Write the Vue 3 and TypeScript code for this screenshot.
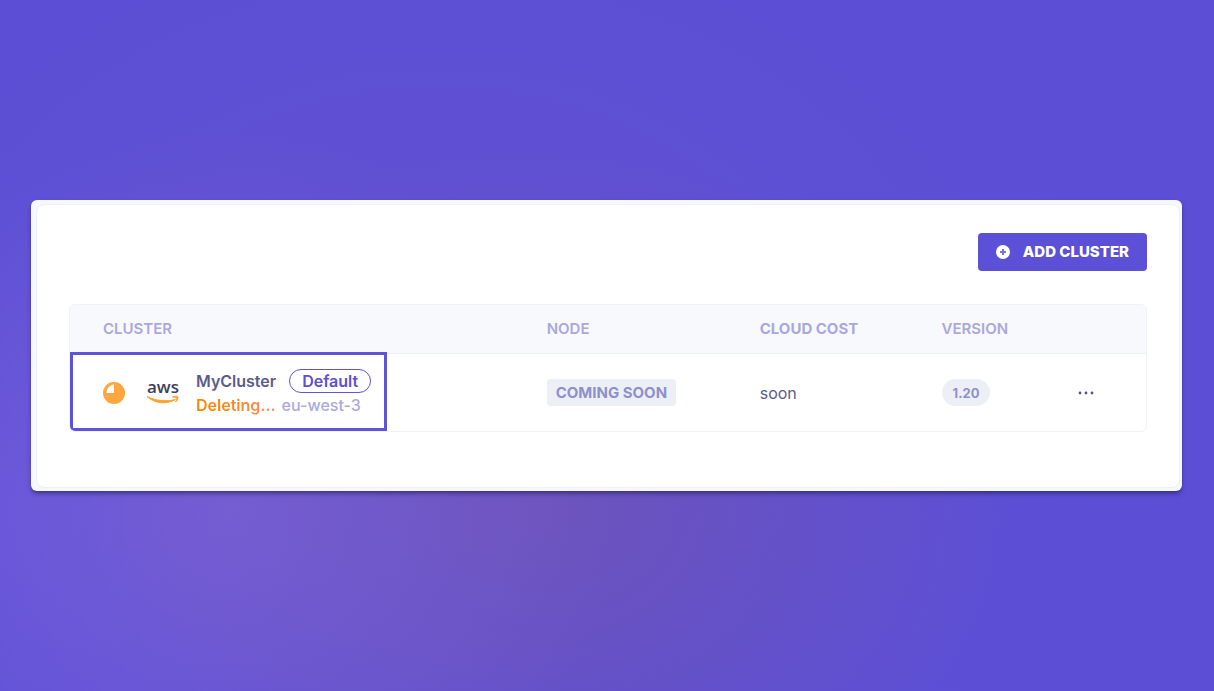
<script setup lang="ts">
interface Cluster {
  name: string
  status: string
  region: string
  nodes: string
  cost: string
  version: string
}

const clusters: Cluster[] = [
  {
    name: 'MyCluster',
    status: 'Deleting...',
    region: 'eu-west-3',
    nodes: 'COMING SOON',
    cost: 'soon',
    version: '1.20',
  },
]
</script>

<template>
  <main class="page">
    <section class="frame">
      <div class="panel">
        <div class="toolbar">
          <button class="add" type="button">
            <svg class="add-icon" viewBox="0 0 14 14" aria-hidden="true">
              <circle cx="7" cy="7" r="7" fill="#fff" />
              <path d="M7 4v6M4 7h6" stroke="#7b72df" stroke-width="2" />
            </svg>
            <span>ADD CLUSTER</span>
          </button>
        </div>

        <div class="table-box">
          <table class="table">
            <colgroup>
              <col class="col-cluster" />
              <col class="col-node" />
              <col class="col-cost" />
              <col class="col-version" />
              <col />
            </colgroup>
            <thead>
              <tr>
                <th class="first" scope="col">CLUSTER</th>
                <th scope="col">NODE</th>
                <th class="strong" scope="col">CLOUD COST</th>
                <th scope="col">VERSION</th>
                <td></td>
              </tr>
            </thead>
            <tbody>
              <tr v-for="cluster in clusters" :key="cluster.name">
                <td class="cluster-cell">
                  <div class="cluster">
                    <svg class="progress" viewBox="0 0 22 22" aria-hidden="true">
                      <circle cx="11" cy="11" r="11" fill="#ffa640" />
                      <path d="M11 2.500V11H3.500C3.500 6.500 6.500 3 11 2.500z" fill="#fff" />
                    </svg>
                    <svg class="aws" viewBox="0 0 34 34" role="img" aria-label="aws">
                      <text class="aws-text" x="1" y="17">aws</text>
                      <path d="M1 20.500C9 28 21 28.500 29.500 23.500C21 25.800 9 24.800 1 20.500z" fill="#ffa32b" stroke="#ffa32b" stroke-width="1" stroke-linejoin="round" />
                      <path d="M26.500 21c2-1 4.800-1 5.300-.5.500.9-.2 3.800-2 5.300.6-1.600 1.100-3 .7-3.800-.6-.6-2.300-.8-4-1z" fill="#ffa32b" stroke="#ffa32b" stroke-width="1" stroke-linejoin="round" />
                    </svg>
                    <div class="info">
                      <div class="line">
                        <span class="name">{{ cluster.name }}</span>
                        <span class="default">Default</span>
                      </div>
                      <div class="line second">
                        <span class="status">{{ cluster.status }}</span>
                        <span class="region">{{ cluster.region }}</span>
                      </div>
                    </div>
                  </div>
                </td>
                <td><span class="tag">{{ cluster.nodes }}</span></td>
                <td>{{ cluster.cost }}</td>
                <td><span class="tag pill">{{ cluster.version }}</span></td>
                <td>
                  <button class="more" type="button" aria-label="More actions">
                    <svg viewBox="0 0 18 4" width="18" height="4" aria-hidden="true">
                      <g fill="#54518f">
                        <circle cx="3" cy="2" r="1.400" />
                        <circle cx="9" cy="2" r="1.400" />
                        <circle cx="15" cy="2" r="1.400" />
                      </g>
                    </svg>
                  </button>
                </td>
              </tr>
            </tbody>
          </table>
        </div>
      </div>
    </section>
  </main>
</template>

<style>
body {
  margin: 0;
}
</style>

<style scoped>
.page {
  box-sizing: border-box;
  min-height: 100vh;
  display: flex;
  align-items: center;
  padding: 0 32px 0 31px;
  font-family: Inter, "Liberation Sans", sans-serif;
  font-size: 16px;
  color: #5d5b8d;
  background:
    radial-gradient(ellipse 380px 380px at 19% 74%, rgba(130, 102, 214, 0.55), rgba(130, 102, 214, 0) 100%),
    radial-gradient(ellipse 460px 360px at 45% 74%, rgba(118, 86, 170, 0.55), rgba(118, 86, 170, 0) 100%),
    radial-gradient(ellipse 680px 560px at 36% 60%, rgba(108, 84, 200, 0.35), rgba(108, 84, 200, 0) 100%),
    radial-gradient(ellipse 280px 360px at 3% 74%, rgba(104, 90, 228, 0.5), rgba(104, 90, 228, 0) 100%),
    #5c4fd5;
}

.frame {
  box-sizing: border-box;
  flex: 1;
  min-width: 0;
  padding: 4px 2px 3px 5px;
  border-radius: 6px;
  background: #f7f8fd;
  box-shadow: 0 3px 5px -1px rgba(25, 20, 80, 0.65);
}

.panel {
  padding: 28px 32px 55px;
  border: 1px solid #edf0f8;
  border-radius: 8px;
  background: #fff;
}

.toolbar {
  display: flex;
  justify-content: flex-end;
  margin-bottom: 33px;
}

.add {
  display: flex;
  align-items: center;
  gap: 13px;
  height: 38px;
  padding: 0 18px;
  border: 0;
  border-radius: 4px;
  background: #5b50d6;
  color: #fff;
  font-family: inherit;
  font-size: 15px;
  line-height: 18px;
  font-weight: 800;
}

.add-icon {
  width: 14px;
  height: 14px;
}

.table-box {
  border: 1px solid #eff2f9;
  border-radius: 6px;
  overflow: hidden;
}

.table {
  width: 100%;
  table-layout: fixed;
  border-collapse: separate;
  border-spacing: 0;
}

.col-cluster {
  width: 44.3%;
}

.col-node {
  width: 19.8%;
}

.col-cost {
  width: 16.9%;
}

.col-version {
  width: 12.6%;
}

.table th,
.table td {
  padding: 0;
  text-align: left;
}

.table thead th,
.table thead td {
  height: 46px;
  padding-bottom: 2px;
  border-bottom: 1px solid #edf0f8;
  background: #f8f9fd;
  color: #a9a8e2;
  font-size: 15px;
  font-weight: 600;
}

.table thead .first {
  padding-left: 33px;
}

.table thead .strong {
  font-weight: 700;
}

.cluster {
  box-sizing: border-box;
  display: inline-flex;
  align-items: center;
  height: 79px;
  margin-top: -2px;
  padding: 2px 13px 0 30px;
  border: 3px solid #5f53d8;
  vertical-align: top;
}

.progress {
  width: 22px;
  height: 22px;
  margin-right: 21px;
}

.aws {
  width: 34px;
  height: 34px;
  margin-right: 16px;
}

.aws-text {
  fill: #3c4356;
  font-family: "Open Sans", sans-serif;
  font-size: 17px;
  font-weight: 600;
}

.line {
  display: flex;
  align-items: center;
  height: 24px;
}

.second {
  gap: 6px;
}

.name {
  margin-right: 13px;
  font-weight: 600;
}

.default {
  box-sizing: border-box;
  height: 24px;
  padding: 0 12px;
  border: 1px solid #5f53d8;
  border-radius: 12px;
  line-height: 22px;
  font-weight: 600;
  color: #5b50d6;
}

.status {
  font-weight: 600;
  background: linear-gradient(90deg, #ff8400 30%, #ff8c72);
  background-clip: text;
  color: transparent;
}

.region {
  color: #abaae0;
  font-weight: 500;
}

.tag {
  display: inline-block;
  height: 27px;
  padding: 0 9px;
  border-radius: 4px;
  background: #edeff7;
  color: #8e90cb;
  font-size: 15px;
  line-height: 28px;
  font-weight: 700;
}

.pill {
  padding: 0 11px;
  border-radius: 14px;
  font-size: 13px;
}

.more {
  display: flex;
  padding: 0;
  border: 0;
  background: none;
}
</style>
